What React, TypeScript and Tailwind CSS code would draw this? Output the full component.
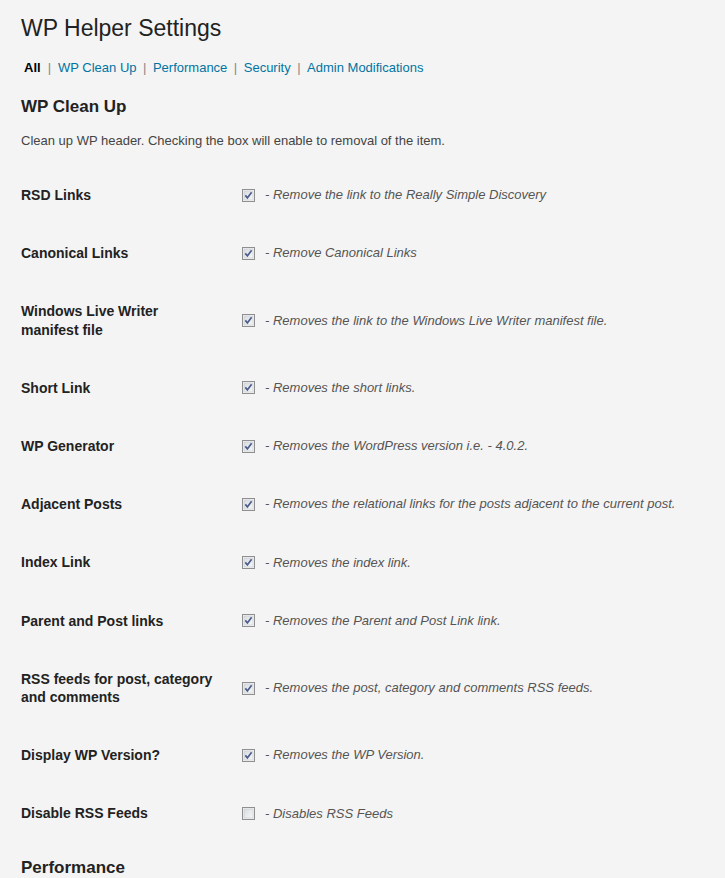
const font = "font-['Liberation_Sans',Arial,sans-serif]";

interface Option {
  label: string[];
  desc: string;
  checked: boolean;
}

const cleanUpOptions: Option[] = [
  { label: ["RSD Links"], desc: "Remove the link to the Really Simple Discovery", checked: true },
  { label: ["Canonical Links"], desc: "Remove Canonical Links", checked: true },
  { label: ["Windows Live Writer", "manifest file"], desc: "Removes the link to the Windows Live Writer manifest file.", checked: true },
  { label: ["Short Link"], desc: "Removes the short links.", checked: true },
  { label: ["WP Generator"], desc: "Removes the WordPress version i.e. - 4.0.2.", checked: true },
  { label: ["Adjacent Posts"], desc: "Removes the relational links for the posts adjacent to the current post.", checked: true },
  { label: ["Index Link"], desc: "Removes the index link.", checked: true },
  { label: ["Parent and Post links"], desc: "Removes the Parent and Post Link link.", checked: true },
  { label: ["RSS feeds for post, category", "and comments"], desc: "Removes the post, category and comments RSS feeds.", checked: true },
  { label: ["Display WP Version?"], desc: "Removes the WP Version.", checked: true },
  { label: ["Disable RSS Feeds"], desc: "Disables RSS Feeds", checked: false },
];

function CheckBox({ checked }: { checked: boolean }) {
  return (
    <svg width="13" height="13" viewBox="0 0 13 13" className="shrink-0 block">
      <defs>
        <linearGradient id="cbfill" x1="0" y1="0" x2="1" y2="1">
          <stop offset="0" stopColor="#d9dbdf" />
          <stop offset="1" stopColor="#f7f8f9" />
        </linearGradient>
      </defs>
      <rect x="0.5" y="0.5" width="12" height="12" fill="#f4f4f4" stroke="#8f8f8f" />
      <rect x="2" y="2" width="9" height="9" fill="url(#cbfill)" stroke="#c4c8cf" strokeWidth="0.6" />
      {checked && (
        <path d="M3.3 6.4 L5.4 8.9 L9.6 3.2" fill="none" stroke="#4a5d8c" strokeWidth="1.7" />
      )}
    </svg>
  );
}

function OptionRow({ opt }: { opt: Option }) {
  return (
    <div className="flex items-center py-[20px]">
      <div className="w-[210px] shrink-0 pr-[10px] text-[14px] leading-[18.2px] font-bold text-[#222] whitespace-nowrap">
        {opt.label.map((line, i) => (
          <div key={i}>{line}</div>
        ))}
      </div>
      <div className="flex items-center pl-[11px]">
        <CheckBox checked={opt.checked} />
        <span className="ml-[10px] text-[13px] leading-[18px] italic text-[#555]">- {opt.desc}</span>
      </div>
    </div>
  );
}

export default function App() {
  const tabs = ["WP Clean Up", "Performance", "Security", "Admin Modifications"];
  return (
    <div className={`${font} bg-[#f4f4f4] min-h-[878px] w-full pl-[21px] pt-[14px] text-[#444] overflow-hidden`}>
      <h2 className="text-[23px] leading-[29px] font-normal text-[#222]">WP Helper Settings</h2>

      <div className="mt-[16px] pl-[3px] text-[13px] leading-[18px] flex items-center whitespace-pre">
        <span className="font-bold text-black">All</span>
        {tabs.map((t, i) => (
          <span key={t} className="flex items-center">
            <span className={`text-[#888] ${i === 0 ? "mx-[7px]" : "mx-[6.5px]"}`}>|</span>
            <a className="text-[#0074a2]">{t}</a>
          </span>
        ))}
      </div>

      <h3 className="mt-[19px] text-[17px] leading-[22px] font-bold text-[#222]">WP Clean Up</h3>
      <p className="mt-[14px] text-[13px] leading-[18px] text-[#444]">
        Clean up WP header. Checking the box will enable to removal of the item.
      </p>

      <div className="mt-[16px]">
        {cleanUpOptions.map((opt) => (
          <OptionRow key={opt.label.join(" ")} opt={opt} />
        ))}
      </div>

      <h3 className="mt-[14px] text-[17px] leading-[22px] font-bold text-[#222]">Performance</h3>
    </div>
  );
}
